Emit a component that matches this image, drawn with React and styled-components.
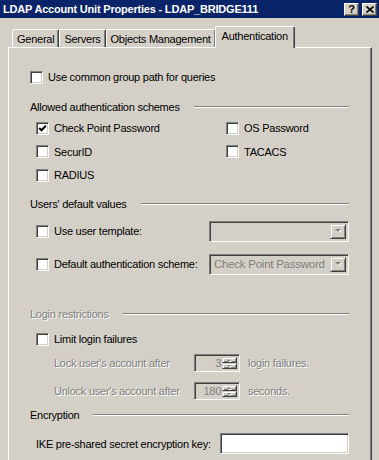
import React from 'react'
import styled, { createGlobalStyle } from 'styled-components'

const GlobalStyle = createGlobalStyle`
    html, body {
        margin: 0;
        padding: 0;
        background: #d4d0c8;
    }
    body {
        font-family: "Liberation Sans", Arial, sans-serif;
        font-size: 11px;
        letter-spacing: -0.25px;
        color: #000;
    }
`

const Window = styled.div`
    width: 379px;
    height: 460px;
    overflow: hidden;
    background: #d4d0c8;
    display: flex;
    flex-direction: column;
`

const TitleBar = styled.div`
    height: 18px;
    flex-shrink: 0;
    background: #0a246a;
    display: flex;
    align-items: center;
    padding: 0 2px 0 3px;
`

const Title = styled.div`
    flex: 1;
    color: #fff;
    font-weight: bold;
    font-size: 11px;
    letter-spacing: -0.2px;
    white-space: nowrap;
`

const CaptionButton = styled.div`
    box-sizing: border-box;
    width: 15px;
    height: 13px;
    margin-left: ${p => p.$gap || 0}px;
    background: #d4d0c8;
    border: 1px solid;
    border-color: #fff #404040 #404040 #fff;
    box-shadow: inset -1px -1px #808080;
    display: flex;
    align-items: center;
    justify-content: center;
    font-weight: bold;
    font-size: 11px;
    line-height: 1;
    color: #000;
`

const Body = styled.div`
    flex: 1;
    padding: 8px 7px 0 8px;
    display: flex;
    flex-direction: column;
`

const TabStrip = styled.div`
    display: flex;
    align-items: flex-end;
    height: 21px;
    padding-left: 4px;
`

const Tab = styled.div`
    box-sizing: border-box;
    height: ${p => (p.$active ? 22 : 18)}px;
    padding: 0 ${p => (p.$active ? 6 : 4)}px;
    padding-bottom: ${p => (p.$active ? 3 : 0)}px;
    margin: 0 0 ${p => (p.$active ? -1 : 0)}px ${p => (p.$active ? -1 : 0)}px;
    background: #d4d0c8;
    border: 1px solid;
    border-bottom: none;
    border-color: #fff #404040 transparent #fff;
    box-shadow: inset -1px 0 #808080;
    border-radius: 2px 2px 0 0;
    display: flex;
    align-items: center;
    position: relative;
    z-index: ${p => (p.$active ? 2 : 1)};
    white-space: nowrap;
`

const Panel = styled.div`
    flex: 1;
    border: 1px solid;
    border-color: #fff #404040 #404040 #fff;
    box-shadow: inset -1px -1px #808080;
    padding: 0 22px 40px 21px;
    display: flex;
    flex-direction: column;
`

const Row = styled.div`
    display: flex;
    align-items: center;
    height: ${p => p.$h || 20}px;
    margin-top: ${p => p.$mt || 0}px;
    padding-left: ${p => p.$indent || 0}px;
    white-space: nowrap;
`

const GroupLabel = styled.span`
    color: ${p => (p.$disabled ? '#808080' : '#000')};
    text-shadow: ${p => (p.$disabled ? '1px 1px #fff' : 'none')};
`

const Etch = styled.div`
    flex: 1;
    margin-left: 14px;
    height: 0;
    border-top: 1px solid #808080;
    border-bottom: 1px solid #fff;
`

const SchemeGrid = styled.div`
    display: grid;
    grid-template-columns: 190px 1fr;
    grid-auto-rows: 20px;
    row-gap: 3.5px;
    margin-top: 1px;
    padding-left: 6px;
`

const CheckItem = styled.label`
    display: flex;
    align-items: center;
    white-space: nowrap;
`

const Box = styled.span`
    box-sizing: border-box;
    width: 13px;
    height: 13px;
    flex-shrink: 0;
    margin-right: 5px;
    background: #fff;
    border: 1px solid;
    border-color: #808080 #fff #fff #808080;
    box-shadow: inset 1px 1px #404040, inset -1px -1px #d4d0c8;
    display: flex;
    align-items: center;
    justify-content: center;
`

const Muted = styled.span`
    color: #808080;
    text-shadow: 1px 1px #fff;
`

const SpinLabel = styled(Muted)`
    width: 140px;
`

const Sunken = styled.div`
    box-sizing: border-box;
    width: ${p => p.$w}px;
    height: ${p => p.$h}px;
    margin-left: ${p => (p.$auto ? 'auto' : '0')};
    background: ${p => (p.$white ? '#fff' : '#d4d0c8')};
    border: 1px solid;
    border-color: #808080 #fff #fff #808080;
    box-shadow: inset 1px 1px #404040, inset -1px -1px #d4d0c8;
    display: flex;
    align-items: stretch;
    padding: 2px;
`

const SelectText = styled.span`
    flex: 1;
    display: flex;
    align-items: center;
    padding-left: 2px;
    font-size: 11.5px;
    color: #808080;
    overflow: hidden;
`

const SpinValue = styled.span`
    flex: 1;
    display: flex;
    align-items: center;
    justify-content: flex-end;
    padding-right: 1px;
    color: #808080;
`

const RaisedButton = styled.div`
    box-sizing: border-box;
    width: ${p => p.$w}px;
    flex: ${p => (p.$grow ? 1 : 'none')};
    background: #d4d0c8;
    border: 1px solid;
    border-color: #d4d0c8 #404040 #404040 #d4d0c8;
    box-shadow: inset 1px 1px #fff, inset -1px -1px #808080;
    display: flex;
    align-items: center;
    justify-content: center;
`

const SpinButtons = styled.div`
    display: flex;
    flex-direction: column;
    width: 15px;
`

const After = styled(Muted)`
    margin-left: 8px;
`

function Arrow({ up, size = 7 }) {
    const h = Math.ceil(size / 2)
    const pts = up
        ? `0,${h} ${size / 2},0 ${size},${h}`
        : `0,0 ${size},0 ${size / 2},${h}`
    return (
        <svg width={size + 1} height={h + 1} viewBox={`0 0 ${size + 1} ${h + 1}`}>
            <polygon points={pts} transform="translate(1 1)" fill="#fff" />
            <polygon points={pts} fill="#808080" />
        </svg>
    )
}

function Check({ checked }) {
    return (
        <Box>
            {checked && (
                <svg width="9" height="9" viewBox="0 0 9 9">
                    <polyline points="1.2,4 3.5,6.3 7.8,1.8" fill="none" stroke="#000" strokeWidth="2" />
                </svg>
            )}
        </Box>
    )
}

function CheckRow({ label, checked, indent, mt }) {
    return (
        <Row $indent={indent} $mt={mt}>
            <CheckItem>
                <Check checked={checked} />
                {label}
            </CheckItem>
        </Row>
    )
}

function Group({ label, mt, disabled }) {
    return (
        <Row $mt={mt}>
            <GroupLabel $disabled={disabled}>{label}</GroupLabel>
            <Etch />
        </Row>
    )
}

function Combo({ value }) {
    return (
        <Sunken $w={140} $h={21} $auto>
            <SelectText>{value}</SelectText>
            <RaisedButton $w={16}>
                <Arrow size={6} />
            </RaisedButton>
        </Sunken>
    )
}

function Spinner({ value }) {
    return (
        <Sunken $w={46} $h={18}>
            <SpinValue>{value}</SpinValue>
            <SpinButtons>
                <RaisedButton $w={15} $grow>
                    <Arrow up size={4} />
                </RaisedButton>
                <RaisedButton $w={15} $grow>
                    <Arrow size={4} />
                </RaisedButton>
            </SpinButtons>
        </Sunken>
    )
}

const schemes = [
    { label: 'Check Point Password', checked: true },
    { label: 'OS Password' },
    { label: 'SecurID' },
    { label: 'TACACS' },
    { label: 'RADIUS' },
]

const tabs = ['General', 'Servers', 'Objects Management', 'Authentication']

export default function App() {
    return (
        <Window>
            <GlobalStyle />
            <TitleBar>
                <Title>LDAP Account Unit Properties - LDAP_BRIDGE111</Title>
                <CaptionButton>?</CaptionButton>
                <CaptionButton $gap={3}>
                    <svg width="8" height="7" viewBox="0 0 8 7">
                        <path d="M0.5 0.5 L7.5 6.5 M7.5 0.5 L0.5 6.5" stroke="#000" strokeWidth="1.6" />
                    </svg>
                </CaptionButton>
            </TitleBar>
            <Body>
                <TabStrip>
                    {tabs.map(t => (
                        <Tab key={t} $active={t === 'Authentication'}>{t}</Tab>
                    ))}
                </TabStrip>
                <Panel>
                    <CheckRow label="Use common group path for queries" mt={19} />

                    <Group label="Allowed authentication schemes" mt={10} />
                    <SchemeGrid>
                        {schemes.map(s => (
                            <CheckItem key={s.label}>
                                <Check checked={s.checked} />
                                {s.label}
                            </CheckItem>
                        ))}
                    </SchemeGrid>

                    <Group label="Users' default values" mt={9} />
                    <Row $h={22} $mt={6} $indent={6}>
                        <CheckItem>
                            <Check />
                            Use user template:
                        </CheckItem>
                        <Combo value="" />
                    </Row>
                    <Row $h={22} $mt={11} $indent={6}>
                        <CheckItem>
                            <Check />
                            Default authentication scheme:
                        </CheckItem>
                        <Combo value="Check Point Password" />
                    </Row>

                    <Group label="Login restrictions" mt={29} disabled />
                    <CheckRow label="Limit login failures" indent={6} mt={5} />
                    <Row $h={18} $mt={5} $indent={24}>
                        <SpinLabel>Lock user's account after</SpinLabel>
                        <Spinner value="3" />
                        <After>login failures.</After>
                    </Row>
                    <Row $h={18} $mt={10} $indent={24}>
                        <SpinLabel>Unlock user's account after</SpinLabel>
                        <Spinner value="180" />
                        <After>seconds.</After>
                    </Row>

                    <Group label="Encryption" mt={5} />
                    <Row $h={21} $mt={8} $indent={6}>
                        <span>IKE pre-shared secret encryption key:</span>
                        <Sunken $w={129} $h={21} $auto $white />
                    </Row>
                </Panel>
            </Body>
        </Window>
    )
}
